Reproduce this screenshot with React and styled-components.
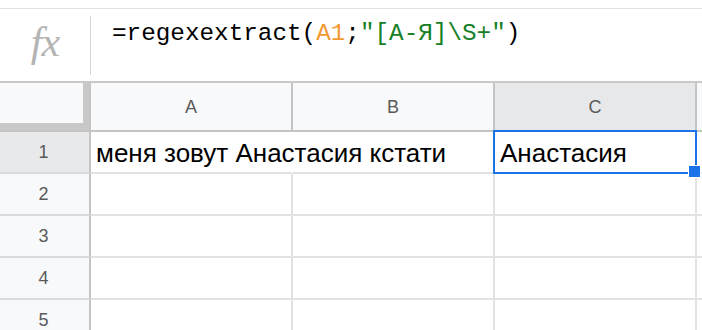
import React from 'react';
import styled, { createGlobalStyle } from 'styled-components';

const GlobalStyle = createGlobalStyle`
  html, body {
    margin: 0;
    padding: 0;
    background: #ffffff;
  }
  body {
    font-family: "Liberation Sans", Arial, sans-serif;
  }
`;

const columns = ['A', 'B', 'C'];
const rows = [
  { num: 1, cells: ['меня зовут Анастасия кстати', '', 'Анастасия'] },
  { num: 2, cells: ['', '', ''] },
  { num: 3, cells: ['', '', ''] },
  { num: 4, cells: ['', '', ''] },
  { num: 5, cells: ['', '', ''] },
];
const selectedCol = 2;
const selectedRow = 1;

function App() {
  return (
    <>
      <GlobalStyle />
      <Page>
        <FormulaBar>
          <FxBox>
            <Fx>fx</Fx>
          </FxBox>
          <Divider />
          <Formula>
            =regexextract(<Ref>A1</Ref>;<Str>"[А-Я]\S+"</Str>)
          </Formula>
        </FormulaBar>
        <Grid>
          <Corner />
          {columns.map((c, i) => (
            <ColHeader key={c} $active={i === selectedCol}>
              {c}
            </ColHeader>
          ))}
          <ColHeader />
          {rows.map((r) => (
            <React.Fragment key={r.num}>
              <RowHeader $active={r.num === selectedRow}>{r.num}</RowHeader>
              {r.cells.map((text, i) => (
                <Cell
                  key={i}
                  $overflow={r.num === 1 && i === 0}
                  $selected={r.num === selectedRow && i === selectedCol}
                >
                  {text}
                  {r.num === selectedRow && i === selectedCol && <Handle />}
                </Cell>
              ))}
              <Cell />
            </React.Fragment>
          ))}
        </Grid>
      </Page>
    </>
  );
}

export default App;

const Page = styled.div`
  width: 702px;
  height: 330px;
  overflow: hidden;
  padding-top: 8px;
  box-sizing: border-box;
`;

const FormulaBar = styled.div`
  display: flex;
  height: 75px;
  border-top: 1px solid #e1e1e1;
  border-bottom: 2px solid #c9c9c9;
  box-sizing: border-box;
`;

const FxBox = styled.div`
  width: 90px;
  display: flex;
  align-items: center;
  justify-content: center;
  box-sizing: border-box;
`;

const Fx = styled.span`
  font-family: "Liberation Serif", "Times New Roman", serif;
  font-style: italic;
  font-size: 42px;
  color: #b4b4b4;
  letter-spacing: -1px;
  margin-top: -6px;
`;

const Divider = styled.div`
  width: 1px;
  margin: 7px 0 6px;
  background: #d6d6d6;
`;

const Formula = styled.div`
  padding: 10px 0 0 21px;
  font-family: "Liberation Mono", "DejaVu Sans Mono", monospace;
  font-size: 24.3px;
  line-height: 30px;
  color: #000000;
  white-space: pre;
`;

const Ref = styled.span`
  color: #f29a32;
`;

const Str = styled.span`
  color: #168026;
`;

const Grid = styled.div`
  display: grid;
  grid-template-columns: 91px 202px 202px 202px 202px;
  grid-template-rows: 49px repeat(5, 42px);
`;

const HeaderBase = styled.div`
  display: flex;
  align-items: center;
  justify-content: center;
  box-sizing: border-box;
  font-family: "Liberation Sans", Arial, sans-serif;
  font-size: 18px;
  color: #5a5a5a;
`;

const Corner = styled(HeaderBase)`
  position: relative;
  background: #f8f9fa;
  border-right: 2px solid #c4c4c4;
  border-bottom: 2px solid #c4c4c4;

  &::after {
    content: '';
    position: absolute;
    right: 0;
    top: 0;
    bottom: 0;
    width: 6px;
    background: #c8c8c8;
  }

  &::before {
    content: '';
    position: absolute;
    left: 0;
    right: 0;
    bottom: 0;
    height: 7px;
    background: #c8c8c8;
  }
`;

const ColHeader = styled(HeaderBase)`
  background: ${(p) => (p.$active ? '#e7e8ea' : '#f8f9fa')};
  border-right: 2px solid #c4c4c4;
  border-bottom: 2px solid #c4c4c4;
  padding-top: 2px;
`;

const RowHeader = styled(HeaderBase)`
  background: ${(p) => (p.$active ? '#e8e9eb' : '#f8f9fa')};
  border-right: 2px solid #c4c4c4;
  border-bottom: 2px solid #dadada;
  padding-right: 2px;
`;

const Cell = styled.div`
  position: relative;
  box-sizing: border-box;
  display: flex;
  align-items: center;
  padding: 3px 0 0 5px;
  border-right: ${(p) => (p.$overflow ? '2px solid transparent' : '2px solid #e2e2e2')};
  border-bottom: 2px solid #e2e2e2;
  font-family: "Liberation Sans", Arial, sans-serif;
  font-size: 26px;
  color: #000000;
  white-space: nowrap;
  overflow: ${(p) => (p.$overflow ? 'visible' : 'hidden')};
  z-index: ${(p) => (p.$overflow || p.$selected ? 1 : 0)};
  background: ${(p) => (p.$overflow ? 'transparent' : '#ffffff')};

  ${(p) =>
    p.$selected &&
    `
    overflow: visible;
    margin: -2px 0 0 -2px;
    padding-left: 7px;
    padding-top: 5px;
    border-right: 2px solid #1a73e8;
    border-bottom: 2px solid #1a73e8;
    box-shadow: inset 2px 2px 0 0 #1a73e8;
  `}
`;

const Handle = styled.span`
  position: absolute;
  right: -6px;
  bottom: -6px;
  width: 11px;
  height: 11px;
  background: #1a73e8;
  border: 1px solid #ffffff;
`;
